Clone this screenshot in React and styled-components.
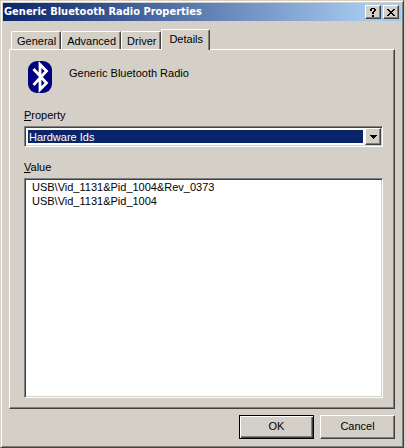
import React, { useState } from 'react'
import { styled, createGlobalStyle } from 'styled-components'


const TABS = ["General", "Advanced", "Driver", "Details"]

const PROPERTIES = {
    "Hardware Ids": ["USB\\Vid_1131&Pid_1004&Rev_0373", "USB\\Vid_1131&Pid_1004"]
}

const GlobalStyle = createGlobalStyle`
    * {
        box-sizing: border-box;
    }
    body {
        margin: 0;
        background: #d4d0c8;
    }
    body, button, select, textarea {
        font-family: "Liberation Sans", Arial, sans-serif;
        font-size: 11px;
        line-height: 14px;
        color: #000;
    }
`

const Window = styled.main`
    display: flex;
    flex-direction: column;
    min-height: 100vh;
    margin-right: 1px;
    padding: 2px 1px 8px;
    background: #d4d0c8;
    border: 1px solid;
    border-color: #d4d0c8 #404040 #404040 #d4d0c8;
    box-shadow: inset 1px 1px #fff, inset -1px -1px #808080;
`

const TitleBar = styled.header`
    display: flex;
    align-items: center;
    gap: 2px;
    height: 18px;
    margin: 0 1px;
    padding: 0 2px 0 1px;
    background: linear-gradient(to right, #0a246a, #a6caf0 92%);
`

const Title = styled.h1`
    flex: 1;
    margin: 0;
    font-family: "DejaVu Sans Condensed", "DejaVu Sans", sans-serif;
    font-size: 11px;
    font-weight: bold;
    line-height: 20px;
    color: #fff;
    white-space: nowrap;
`

const CaptionButton = styled.button`
    display: flex;
    justify-content: center;
    align-items: center;
    width: 16px;
    height: 14px;
    padding: 0;
    background: #d4d0c8;
    border: 1px solid;
    border-color: #fff #404040 #404040 #fff;
    box-shadow: inset -1px -1px #808080;
`

const TabList = styled.div`
    display: flex;
    align-items: flex-end;
    margin: 8px 9px 0 9px;
`

const Tab = styled.button`
    position: relative;
    height: ${(props) => props.$active ? "21px" : "18px"};
    margin-bottom: ${(props) => props.$active ? "-1px" : "0"};
    padding: ${(props) => props.$active ? "0 6px 2px 7px" : "0 4px 0 5px"};
    background: #d4d0c8;
    border: 1px solid;
    border-color: #fff #404040 transparent #fff;
    border-bottom: 0;
    border-radius: 2px 2px 0 0;
    box-shadow: inset -1px 0 #808080;
`

const Panel = styled.section`
    flex: 1;
    display: flex;
    flex-direction: column;
    margin: 0 7px;
    padding: 10px 11px 10px 14px;
    border: 1px solid;
    border-color: #fff #404040 #404040 #fff;
    box-shadow: inset -1px -1px #808080;
`

const Device = styled.div`
    display: flex;
    align-items: flex-start;
    gap: 13px;
    height: 48px;
`

const DeviceName = styled.span`
    padding-top: 6px;
`

const Label = styled.label`
    margin-bottom: 4px;
    line-height: 14px;

    &::first-letter {
        text-decoration: underline;
    }
`

const Sunken = styled.div`
    display: flex;
    background: #fff;
    border: 1px solid;
    border-color: #808080 #fff #fff #808080;
    box-shadow: inset 1px 1px #404040, inset -1px -1px #d4d0c8;
`

const ComboBox = styled(Sunken)`
    position: relative;
    height: 21px;
    margin-bottom: 13px;
    padding: 3px 19px 3px 3px;
`

const Select = styled.select`
    flex: 1;
    appearance: none;
    padding: 0 1px;
    border: 0;
    border-radius: 0;
    outline: 0;
    background: #0a246a;
    color: #fff;
`

const DropArrow = styled.span`
    position: absolute;
    top: 1px;
    right: 1px;
    bottom: 1px;
    width: 16px;
    display: flex;
    justify-content: center;
    align-items: center;
    background: #d4d0c8;
    border: 1px solid;
    border-color: #fff #404040 #404040 #fff;
    box-shadow: inset -1px -1px #808080;
    pointer-events: none;
`

const ValueBox = styled(Sunken)`
    flex: 1;
    padding: 1px;
`

const ValueText = styled.textarea`
    flex: 1;
    min-width: 0;
    padding: 0 6px;
    border: 0;
    outline: 0;
    resize: none;
    background: #fff;
`

const Footer = styled.footer`
    display: flex;
    justify-content: flex-end;
    gap: 6px;
    margin: 6px 7px 0;
`

const PushButton = styled.button`
    width: 75px;
    height: 24px;
    padding: 0 0 2px;
    background: #d4d0c8;
    border: 1px solid;
    border-color: ${(props) => props.$isDefault ? "#000" : "#fff #404040 #404040 #fff"};
    box-shadow: ${(props) => props.$isDefault
        ? "inset 1px 1px #fff, inset -1px -1px #404040, inset -2px -2px #808080"
        : "inset -1px -1px #808080"};
`

function BluetoothIcon() {
    return (
        <svg width="32" height="34" viewBox="0 0 32 34" aria-hidden="true">
            <rect x="4" y="1" width="24" height="32" rx="9" fill="#000080" />
            <path d="M9.5 9 L22.5 23 L16 29.5 V4.5 L22.5 11 L9.5 25" fill="none" stroke="#fff" strokeWidth="2.8" />
        </svg>
    )
}

function App() {
    const [activeTab, setActiveTab] = useState("Details");
    const [property, setProperty] = useState("Hardware Ids");

    return (
    <>
        <GlobalStyle />
        <Window>
            <TitleBar>
                <Title>Generic Bluetooth Radio Properties</Title>
                <CaptionButton aria-label="Help">
                    <svg width="8" height="9" viewBox="0 0 8 9" shapeRendering="crispEdges">
                        <path d="M1 1h2v2h-2zM2 0h4v1h-4zM5 1h2v2h-2zM4 3h2v1h-2zM3 4h2v2h-2zM3 7h2v2h-2z" />
                    </svg>
                </CaptionButton>
                <CaptionButton aria-label="Close">
                    <svg width="8" height="7" viewBox="0 0 8 7" shapeRendering="crispEdges">
                        <path d="M0 0h2v1h-2zM6 0h2v1h-2zM1 1h2v1h-2zM5 1h2v1h-2zM2 2h4v1h-4zM3 3h2v1h-2zM2 4h4v1h-4zM1 5h2v1h-2zM5 5h2v1h-2zM0 6h2v1h-2zM6 6h2v1h-2z" />
                    </svg>
                </CaptionButton>
            </TitleBar>
            <TabList role="tablist">
                {TABS.map(tab => (
                    <Tab
                        key={tab}
                        role="tab"
                        aria-selected={tab === activeTab}
                        $active={tab === activeTab}
                        onClick={() => setActiveTab(tab)}
                    >
                        {tab}
                    </Tab>
                    )
                )}
            </TabList>
            <Panel>
                <Device>
                    <BluetoothIcon />
                    <DeviceName>Generic Bluetooth Radio</DeviceName>
                </Device>
                <Label htmlFor="property">Property</Label>
                <ComboBox>
                    <Select id="property" value={property} onChange={(e) => setProperty(e.target.value)}>
                        {Object.keys(PROPERTIES).map(name => (
                            <option key={name}>{name}</option>
                        ))}
                    </Select>
                    <DropArrow>
                        <svg width="7" height="4" viewBox="0 0 7 4" shapeRendering="crispEdges">
                            <path d="M0 0h7v1h-7zM1 1h5v1h-5zM2 2h3v1h-3zM3 3h1v1h-1z" />
                        </svg>
                    </DropArrow>
                </ComboBox>
                <Label htmlFor="value">Value</Label>
                <ValueBox>
                    <ValueText id="value" readOnly value={PROPERTIES[property].join("\n")} />
                </ValueBox>
            </Panel>
            <Footer>
                <PushButton $isDefault>OK</PushButton>
                <PushButton>Cancel</PushButton>
            </Footer>
        </Window>
    </>
  )
}


export default App
